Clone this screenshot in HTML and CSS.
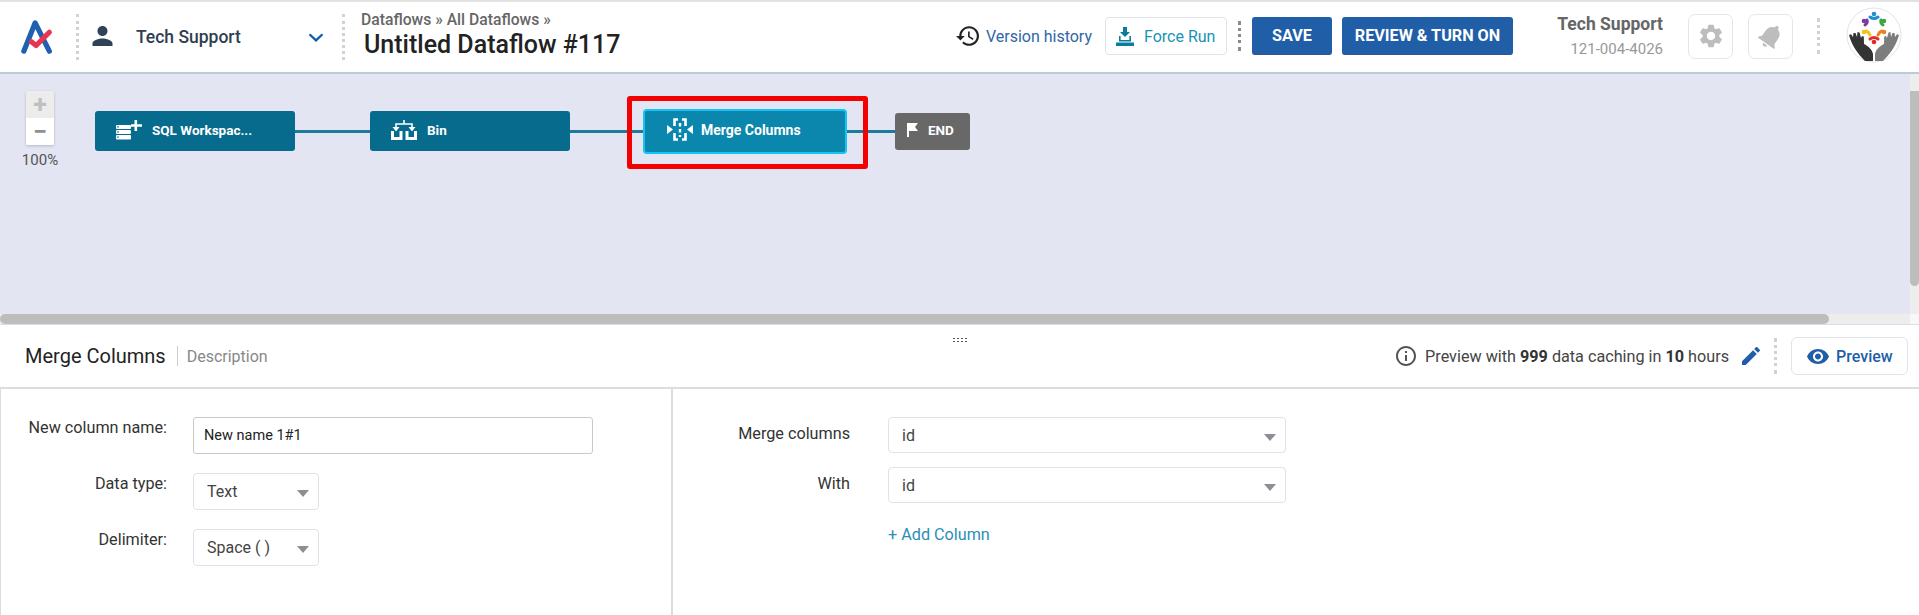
FILE: index.html
```html
<!DOCTYPE html>
<html lang="en">
<head>
<meta charset="utf-8">
<title>Untitled Dataflow #117</title>
<link rel="stylesheet" href="styles.css">
</head>
<body>
<header class="topbar">
  <div class="logo-cell">
    <svg class="logo" viewBox="0 0 36 38"><path d="M3 34 15 4 30 34" fill="none" stroke="#2060b0" stroke-width="5.5" stroke-linecap="round" stroke-linejoin="round"/><path d="M11 24l5 4L30 14" fill="none" stroke="#e8344e" stroke-width="5.5" stroke-linecap="round" stroke-linejoin="round"/></svg>
  </div>
  <div class="vdots tall"></div>
  <div class="account">
    <svg class="person" viewBox="4 4 16 16"><path fill="#2f4257" d="M12 12c2.21 0 4-1.79 4-4s-1.79-4-4-4-4 1.79-4 4 1.79 4 4 4zm0 2c-2.67 0-8 1.34-8 4v2h16v-2c0-2.66-5.33-4-8-4z"/></svg>
    <span class="account-name">Tech Support</span>
    <svg class="chevron" viewBox="0 0 16 9"><path d="M1.5 1.2 8 7.4l6.5-6.2" fill="none" stroke="#0b5cb0" stroke-width="2.2"/></svg>
  </div>
  <div class="vdots tall"></div>
  <div class="titles">
    <div class="crumbs">Dataflows » All Dataflows »</div>
    <div class="page-title">Untitled Dataflow #117</div>
  </div>
  <div class="actions">
    <svg class="history" viewBox="1 3 21 18"><path fill="#222" d="M13 3c-4.97 0-9 4.03-9 9H1l3.89 3.89.07.14L9 12H6c0-3.87 3.13-7 7-7s7 3.13 7 7-3.13 7-7 7c-1.93 0-3.68-.79-4.94-2.06l-1.42 1.42C8.27 19.99 10.51 21 13 21c4.97 0 9-4.03 9-9s-4.03-9-9-9zm-1 5v5l4.28 2.54.72-1.21-3.5-2.08V8H12z"/></svg>
    <span class="version">Version history</span>
    <div class="force">
      <svg class="force-icon" viewBox="0 0 18 19"><path fill="#0a7d9c" d="M7 0h4v5h3L9 10 4 5h3zM3 9h1.6v4h8.8V9H15v5.5H3zM0 15.5h18V19H0z"/></svg>
      <span>Force Run</span>
    </div>
    <div class="vdots mid"></div>
    <div class="btn save">SAVE</div>
    <div class="btn review">REVIEW &amp; TURN ON</div>
    <div class="user">
      <div class="user-name">Tech Support</div>
      <div class="user-phone">121-004-4026</div>
    </div>
    <div class="icon-btn">
      <svg viewBox="0 0 24 24" class="gear"><path fill="#bdbdbd" d="M19.14 12.94c.04-.3.06-.61.06-.94 0-.32-.02-.64-.07-.94l2.03-1.58c.18-.14.23-.41.12-.61l-1.92-3.32c-.12-.22-.37-.29-.59-.22l-2.39.96c-.5-.38-1.03-.7-1.62-.94l-.36-2.54c-.04-.24-.24-.41-.48-.41h-3.84c-.24 0-.43.17-.47.41l-.36 2.54c-.59.24-1.13.57-1.62.94l-2.39-.96c-.22-.08-.47 0-.59.22L2.74 8.87c-.12.21-.08.47.12.61l2.03 1.58c-.05.3-.09.63-.09.94s.02.64.07.94l-2.03 1.58c-.18.14-.23.41-.12.61l1.92 3.32c.12.22.37.29.59.22l2.39-.96c.5.38 1.03.7 1.62.94l.36 2.54c.05.24.24.41.48.41h3.84c.24 0 .44-.17.47-.41l.36-2.54c.59-.24 1.13-.56 1.62-.94l2.39.96c.22.08.47 0 .59-.22l1.92-3.32c.12-.22.07-.47-.12-.61l-2.01-1.58zM12 15.6c-1.98 0-3.6-1.62-3.6-3.6s1.62-3.6 3.6-3.6 3.6 1.62 3.6 3.6-1.62 3.6-3.6 3.6z"/></svg>
    </div>
    <div class="icon-btn">
      <svg viewBox="0 0 24 24" class="bell"><path fill="#bdbdbd" d="M12 22c1.1 0 2-.9 2-2h-4c0 1.1.89 2 2 2zm6-6v-5c0-3.07-1.64-5.64-4.5-6.32V4c0-.83-.67-1.5-1.5-1.5s-1.5.67-1.5 1.5v.68C7.63 5.36 6 7.92 6 11v5l-2 2v1h16v-1l-2-2z"/></svg>
    </div>
    <div class="vdots short"></div>
    <svg class="avatar" viewBox="0 0 56 56">
      <circle cx="28" cy="28" r="27" fill="#fff" stroke="#dfe4ec" stroke-width="1"/>
      <path fill="#333" d="M27 54H19C12 47 6 39 3 28l2-.8L7 30l.5-4 2 0L11 30l.5-5 2 .5L15 31l1-2 1.800.5L18 37c4 2 8 5 9 10z"/>
      <path fill="#7d7d7d" d="M29 54h8C44 47 50 39 53 28l-2-.8L49 30l-.5-4-2 0L45 30l-.5-5-2 .5L41 31l-1-2-1.800.5L38 37c-4 2-8 5-9 10z"/>
      <g fill="none" stroke-width="3" stroke-linecap="round">
        <path stroke="#1f8fd0" d="M24 10q4 3 8 0"/>
        <path stroke="#3da544" d="M35 13q-1 3 2 5"/>
        <path stroke="#f0811f" d="M36 24q-3 1-4 4"/>
        <path stroke="#e32b2b" d="M32 32q-4-3-8 0"/>
        <path stroke="#f6c21c" d="M20 24q3 1 4 4"/>
        <path stroke="#7a3aa0" d="M21 13q1 3-2 5"/>
      </g>
      <circle cx="28" cy="7" r="2.300" fill="#1f8fd0"/><circle cx="38" cy="14" r="2.300" fill="#3da544"/><circle cx="38" cy="25" r="2.300" fill="#f0811f"/><circle cx="28" cy="35" r="2.300" fill="#e32b2b"/><circle cx="18" cy="25" r="2.300" fill="#f6c21c"/><circle cx="18" cy="14" r="2.300" fill="#7a3aa0"/>
    </svg>
  </div>
</header>

<section class="canvas-frame">
  <div class="canvas">
    <div class="zoom-col">
      <div class="zoom-box">
        <div class="zoom-btn plus">+</div>
        <div class="zoom-btn minus">−</div>
      </div>
      <div class="zoom-pct">100%</div>
    </div>
    <div class="flow">
      <div class="node">
        <svg class="node-icon" viewBox="0 0 26 20"><g fill="#fff"><rect x="0" y="5" width="15" height="4" rx="1"/><rect x="0" y="10" width="15" height="4" rx="1"/><rect x="0" y="15" width="15" height="4.5" rx="1"/><rect x="1" y="6.400" width="2" height="1" fill="#066b8c"/><rect x="1" y="11.400" width="2" height="1" fill="#066b8c"/><rect x="1" y="16.600" width="2" height="1" fill="#066b8c"/><path d="M18.500 0h2.600v4.200H26v2.600h-4.900V11h-2.600V6.800H15V4.200h3.500z"/></g></svg>
        <span>SQL Workspac...</span>
      </div>
      <div class="link l1"></div>
      <div class="node">
        <svg class="node-icon" viewBox="0 0 26 20"><g fill="none" stroke="#fff" stroke-width="1.6"><path d="M13 0v4M5 8V4h16v4"/></g><path fill="#fff" d="M1.500 7h7L5 11.500zM17.500 7h7L21 11.500z"/><g fill="none" stroke="#fff" stroke-width="3"><path d="M1.500 11v7.500h8.500V11M16 11v7.500h8.500V11"/></g></svg>
        <span>Bin</span>
      </div>
      <div class="link l2"></div>
      <div class="node active">
        <svg class="node-icon merge" viewBox="0 0 26 23"><g fill="none" stroke="#fff" stroke-width="2.6"><path d="M11 1.500H7.500V8M7.500 15v6.500H11M15 1.500h3.500V8M18.500 15v6.500H15"/></g><path fill="#fff" d="M0 7l6 4.500L0 16zM26 7l-6 4.500 6 4.500z"/><path d="M13 5v14" stroke="#fff" stroke-width="2.4" stroke-dasharray="3.500 2.500" fill="none"/></svg>
        <span class="merge-label">Merge Columns</span>
        <div class="highlight"></div>
      </div>
      <div class="link l3"></div>
      <div class="node end">
        <svg class="flag" viewBox="0 0 11 14"><path fill="#fff" d="M0 0h11L8 4l3 4H2v6H0z"/></svg>
        <span>END</span>
      </div>
    </div>
  </div>
  <div class="vscroll"><div class="vthumb"></div></div>
  <div class="hscroll"><div class="hthumb"></div></div>
  <div class="corner"></div>
</section>

<section class="panel">
  <div class="handle"></div>
  <div class="panel-head">
    <span class="panel-title">Merge Columns</span>
    <span class="panel-desc">Description</span>
    <div class="panel-tools">
      <svg class="info" viewBox="2 2 20 20"><path fill="#555" d="M11 7h2v2h-2zm0 4h2v6h-2zm1-9C6.480 2 2 6.480 2 12s4.480 10 10 10 10-4.480 10-10S17.520 2 12 2zm0 18c-4.410 0-8-3.590-8-8s3.590-8 8-8 8 3.590 8 8-3.590 8-8 8z"/></svg>
      <span class="cache">Preview with <b>999</b> data caching in <b>10</b> hours</span>
      <svg class="pencil" viewBox="3 3 18 18"><path fill="#205ea8" d="M3 17.250V21h3.750L17.810 9.940l-3.750-3.750L3 17.250zM20.710 7.040c.39-.39.39-1.020 0-1.410l-2.340-2.340c-.39-.39-1.020-.39-1.410 0l-1.830 1.830 3.750 3.750 1.830-1.830z"/></svg>
      <div class="vdots panel-dots"></div>
      <div class="preview">
        <svg class="eye" viewBox="1 4.500 22 15"><path fill="#205ea8" d="M12 4.500C7 4.500 2.730 7.610 1 12c1.730 4.390 6 7.500 11 7.500s9.270-3.110 11-7.500c-1.730-4.390-6-7.500-11-7.500zM12 17c-2.760 0-5-2.240-5-5s2.240-5 5-5 5 2.240 5 5-2.240 5-5 5zm0-8c-1.660 0-3 1.340-3 3s1.340 3 3 3 3-1.340 3-3-1.340-3-3-3z"/></svg>
        <span>Preview</span>
      </div>
    </div>
  </div>
  <div class="panel-body">
    <div class="form-left">
      <label class="f-label">New column name:</label>
      <div class="text-input">New name 1#1</div>
      <label class="f-label">Data type:</label>
      <div class="select small">Text<i class="caret"></i></div>
      <label class="f-label">Delimiter:</label>
      <div class="select small">Space ( )<i class="caret"></i></div>
    </div>
    <div class="form-right">
      <label class="r-label">Merge columns</label>
      <div class="select wide">id<i class="caret"></i></div>
      <label class="r-label">With</label>
      <div class="select wide">id<i class="caret"></i></div>
      <span></span>
      <div class="add">+ Add Column</div>
    </div>
  </div>
</section>
</body>
</html>
```

FILE: styles.css
```css
* { box-sizing: border-box; }
html, body { margin: 0; height: 615px; overflow: hidden; background: #fff; }
body { font-family: Roboto, "Liberation Sans", sans-serif; color: #333; }

/* Top bar */
.topbar {
  height: 74px;
  border-top: 2px solid #e2e2e2;
  border-bottom: 2px solid #bccbd9;
  display: flex;
  align-items: center;
  background: #fff;
}
.logo-cell { width: 76px; padding-left: 21px; display: flex; }
.logo { width: 34px; height: 36px; }
.vdots { border-left: 3px dotted #d2d2d2; flex: none; }
.vdots.tall { height: 46px; }
.account { width: 263px; padding-left: 13px; padding-right: 18px; display: flex; align-items: center; }
.person { width: 21px; height: 20px; margin-top: -2px; }
.account-name { margin-left: 23px; font-size: 17.5px; font-weight: 500; color: #2f3e50; flex: 1; }
.chevron { width: 16px; height: 9px; }
.titles { margin-left: 16px; margin-top: -2px; }
.crumbs { font-size: 15.7px; font-weight: 500; color: #666; line-height: 18px; }
.page-title { font-size: 25px; font-weight: 500; color: #222; line-height: 32px; margin-left: 3px; }
.actions { margin-left: auto; display: flex; align-items: center; padding-right: 17px; margin-top: -2px; }
.history { width: 23px; height: 20px; }
.version { margin-left: 7px; font-size: 16px; color: #2f66a8; }
.force {
  margin-left: 13px; width: 122px; height: 38px;
  border: 1px solid #dfe4ea; border-radius: 4px;
  display: flex; align-items: center; padding-left: 10px;
  font-size: 16px; color: #1a93b5;
}
.force-icon { width: 18px; height: 19px; margin-right: 10px; }
.vdots.mid { height: 30px; margin: 0 11px; border-left-color: #8a8a8a; }
.btn {
  height: 38px; background: #205ea8; color: #fff; border-radius: 3px;
  border-bottom: 1px solid #3c4f90;
  font-size: 16.2px; font-weight: 700; display: flex; align-items: center; justify-content: center;
}
.save { width: 80px; }
.review { width: 171px; margin-left: 10px; }
.user { width: 150px; text-align: right; padding-right: 0; margin-top: 1px; }
.user-name { font-size: 17.5px; font-weight: 700; color: #666; line-height: 24px; }
.user-phone { font-size: 15px; color: #999; line-height: 24px; margin-top: 1px; }
.icon-btn {
  width: 45px; height: 45px; margin-left: 25px; border: 1px solid #e3e6ec; border-radius: 7px;
  display: flex; align-items: center; justify-content: center;
}
.icon-btn + .icon-btn { margin-left: 15px; }
.gear { width: 28px; height: 28px; }
.bell { width: 30px; height: 30px; transform: rotate(35deg); }
.vdots.short { height: 36px; margin-left: 24px; }
.avatar { width: 56px; height: 56px; margin-left: 26px; margin-top: -2px; }

/* Canvas */
.canvas-frame {
  height: 251px;
  display: grid;
  grid-template-columns: 1fr 9px;
  grid-template-rows: 1fr 10px;
  background: #e3e5f3;
  border-bottom: 1px solid #dcdcec;
}
.canvas { display: flex; align-items: flex-start; padding: 17px 0 0 26px; overflow: hidden; }
.zoom-col { width: 28px; display: flex; flex-direction: column; align-items: center; }
.zoom-box { width: 28px; border-radius: 2px; overflow: hidden; box-shadow: 0 1px 3px rgba(0,0,0,.2); }
.zoom-btn { height: 27px; display: flex; align-items: center; justify-content: center; font-size: 25px; font-weight: 700; color: #a9a9a9; }
.plus { background: #ececec; color: #c0c0c0; }
.minus { background: #fff; color: #8f8f8f; }
.zoom-pct { font-size: 15px; color: #555; margin-top: 6px; white-space: nowrap; }
.flow { display: flex; align-items: center; margin: 20px 0 0 41px; height: 40px; }
.node {
  position: relative; flex: none;
  width: 200px; height: 40px; background: #066b8c; border-radius: 3px;
  display: flex; align-items: center; padding-left: 21px; padding-bottom: 3px;
  color: #fff; font-size: 13.5px; font-weight: 700;
}
.node-icon { width: 26px; height: 20px; margin-right: 10px; flex: none; }
.node.active {
  width: 204px; height: 45px; background: #0b86ad; border: 2px solid #14c4f5; border-radius: 4px; padding-left: 22px;
}
.node-icon.merge { height: 23px; margin-right: 8px; }
.merge-label { font-size: 14px; }
.highlight {
  position: absolute; left: -18px; top: -15px; width: 241px; height: 73px;
  border: 5px solid #f50000; border-radius: 3px;
}
.node.end { width: 75px; height: 37px; background: #686868; padding-left: 12px; }
.flag { width: 11px; height: 14px; margin-right: 10px; }
.link { height: 3px; background: #1c7b9a; flex: none; }
.l1 { width: 75px; }
.l2 { width: 73px; }
.l3 { width: 48px; }
.vscroll { background: #ededed; }
.vthumb { height: 195px; margin-top: 17px; background: #bdbdbd; border-radius: 0 0 5px 5px; }
.hscroll { background: #ededed; }
.hthumb { width: 1829px; height: 10px; background: #bdbdbd; border-radius: 5px; }
.corner { background: #f8f8fb; }

/* Panel */
.panel { position: relative; }
.handle {
  position: absolute; left: 952px; top: 12px; width: 16px; height: 6px;
  background-image: radial-gradient(circle, #555 .8px, transparent 1.1px);
  background-size: 4px 3px;
}
.panel-head {
  height: 64px; border-bottom: 2px solid #dcdcdc;
  display: flex; align-items: center; padding-left: 25px;
}
.panel-title { font-size: 20px; color: #222; padding-right: 11px; border-right: 1px solid #ccc; line-height: 20px; }
.panel-desc { font-size: 16px; color: #888; margin-left: 9px; }
.panel-tools { margin-left: auto; display: flex; align-items: center; padding-right: 11px; }
.info { width: 20px; height: 20px; }
.cache { margin-left: 9px; font-size: 16.2px; color: #444; }
.cache b { font-weight: 700; color: #333; }
.pencil { width: 18px; height: 18px; margin-left: 13px; }
.vdots.panel-dots { height: 36px; margin: 0 14px; }
.preview {
  width: 117px; height: 38px; border: 1px solid #e0e4ea; border-radius: 6px;
  display: flex; align-items: center; padding-left: 15px;
  color: #205ea8; font-size: 16px; font-weight: 500;
}
.eye { width: 22px; height: 15px; margin-right: 7px; }
.panel-body { display: flex; height: 226px; border-left: 1px solid #dcdcdc; }
.form-left {
  width: 672px; border-right: 2px solid #dcdcdc;
  display: grid; grid-template-columns: 166px 400px; column-gap: 26px; row-gap: 19px;
  grid-auto-rows: 37px; padding-top: 28px;
}
.f-label { font-size: 16.2px; color: #333; text-align: right; line-height: 22px; white-space: nowrap; }
.text-input {
  border: 1px solid #c9c9c9; border-radius: 3px; padding-left: 10px;
  font-size: 14.5px; color: #222; display: flex; align-items: center;
}
.select {
  position: relative; border: 1px solid #e2e2e2; border-radius: 4px;
  font-size: 16px; color: #444; display: flex; align-items: center; padding-left: 13px;
}
.select.small { width: 126px; }
.caret {
  position: absolute; right: 9px; top: 16px;
  border-left: 6px solid transparent; border-right: 6px solid transparent; border-top: 7px solid #8b8f96;
}
.form-right {
  margin-left: 65px;
  display: grid; grid-template-columns: 112px 398px; column-gap: 38px; row-gap: 14px;
  grid-auto-rows: 36px; padding-top: 28px; align-content: start;
}
.r-label { font-size: 16.2px; color: #333; text-align: right; line-height: 34px; white-space: nowrap; }
.add { font-size: 16.2px; color: #2a8fb5; line-height: 36px; }
```
